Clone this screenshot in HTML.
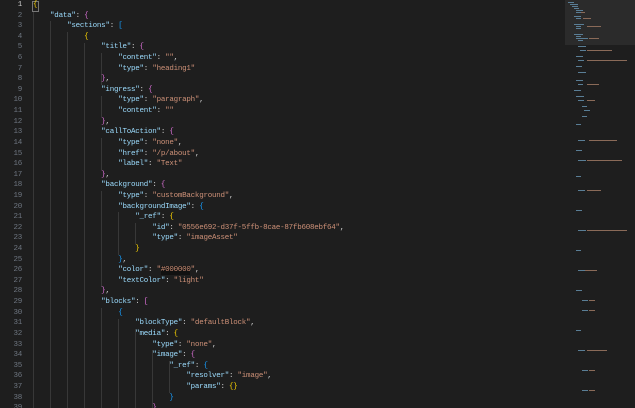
<!DOCTYPE html>
<html><head><meta charset="utf-8"><style>
html,body{margin:0;padding:0;background:#1e1e1e;width:635px;height:408px;overflow:hidden}
body{position:relative;font-family:"Liberation Mono",monospace;font-size:7.5px;letter-spacing:-0.24px;color:#d4d4d4}
.l{position:absolute;left:0;height:10.61px;line-height:10.61px;white-space:pre;width:560px}
.n{position:absolute;left:0;width:22px;text-align:right;color:#6e7681}
.c{position:absolute;left:33px}
.k{color:#9cdcfe}.s{color:#ce9178}.g{color:#ffd700}.m{color:#da70d6}.b{color:#179fff}
.guide{position:absolute;width:1px;background:#383838}
</style></head><body>
<div style="position:absolute;left:565px;top:0;width:70px;height:45px;background:#2b2b2b"></div>
<div class="guide" style="left:33px;top:11px;height:397px"></div>
<div class="guide" style="left:50px;top:21px;height:387px"></div>
<div class="guide" style="left:67px;top:32px;height:376px"></div>
<div class="guide" style="left:84px;top:43px;height:365px"></div>
<div class="guide" style="left:101px;top:53px;height:32px"></div>
<div class="guide" style="left:101px;top:96px;height:21px"></div>
<div class="guide" style="left:101px;top:138px;height:32px"></div>
<div class="guide" style="left:101px;top:191px;height:96px"></div>
<div class="guide" style="left:101px;top:308px;height:100px"></div>
<div class="guide" style="left:118px;top:212px;height:43px"></div>
<div class="guide" style="left:118px;top:319px;height:89px"></div>
<div class="guide" style="left:135px;top:223px;height:21px"></div>
<div class="guide" style="left:135px;top:329px;height:79px"></div>
<div class="guide" style="left:152px;top:350px;height:58px"></div>
<div class="guide" style="left:169px;top:361px;height:32px"></div>
<div style="position:absolute;left:32px;top:1px;width:5px;height:9px;border:1px solid #777"></div>
<div style="position:absolute;left:161px;top:266px;width:29px;height:9px;background:#111"></div>
<div class="l" style="top:0px"><span class="n" style="color:#ccc">1</span><span class="c"><span class="g">{</span></span></div>
<div class="l" style="top:10.61px"><span class="n">2</span><span class="c">    <span class="k">"data"</span>: <span class="m">{</span></span></div>
<div class="l" style="top:21.22px"><span class="n">3</span><span class="c">        <span class="k">"sections"</span>: <span class="b">[</span></span></div>
<div class="l" style="top:31.83px"><span class="n">4</span><span class="c">            <span class="g">{</span></span></div>
<div class="l" style="top:42.44px"><span class="n">5</span><span class="c">                <span class="k">"title"</span>: <span class="m">{</span></span></div>
<div class="l" style="top:53.05px"><span class="n">6</span><span class="c">                    <span class="k">"content"</span>: <span class="s">""</span>,</span></div>
<div class="l" style="top:63.66px"><span class="n">7</span><span class="c">                    <span class="k">"type"</span>: <span class="s">"heading1"</span></span></div>
<div class="l" style="top:74.27px"><span class="n">8</span><span class="c">                <span class="m">}</span>,</span></div>
<div class="l" style="top:84.88px"><span class="n">9</span><span class="c">                <span class="k">"ingress"</span>: <span class="m">{</span></span></div>
<div class="l" style="top:95.49px"><span class="n">10</span><span class="c">                    <span class="k">"type"</span>: <span class="s">"paragraph"</span>,</span></div>
<div class="l" style="top:106.1px"><span class="n">11</span><span class="c">                    <span class="k">"content"</span>: <span class="s">""</span></span></div>
<div class="l" style="top:116.71px"><span class="n">12</span><span class="c">                <span class="m">}</span>,</span></div>
<div class="l" style="top:127.32px"><span class="n">13</span><span class="c">                <span class="k">"callToAction"</span>: <span class="m">{</span></span></div>
<div class="l" style="top:137.93px"><span class="n">14</span><span class="c">                    <span class="k">"type"</span>: <span class="s">"none"</span>,</span></div>
<div class="l" style="top:148.54px"><span class="n">15</span><span class="c">                    <span class="k">"href"</span>: <span class="s">"/p/about"</span>,</span></div>
<div class="l" style="top:159.15px"><span class="n">16</span><span class="c">                    <span class="k">"label"</span>: <span class="s">"Text"</span></span></div>
<div class="l" style="top:169.76px"><span class="n">17</span><span class="c">                <span class="m">}</span>,</span></div>
<div class="l" style="top:180.37px"><span class="n">18</span><span class="c">                <span class="k">"background"</span>: <span class="m">{</span></span></div>
<div class="l" style="top:190.98px"><span class="n">19</span><span class="c">                    <span class="k">"type"</span>: <span class="s">"customBackground"</span>,</span></div>
<div class="l" style="top:201.59px"><span class="n">20</span><span class="c">                    <span class="k">"backgroundImage"</span>: <span class="b">{</span></span></div>
<div class="l" style="top:212.2px"><span class="n">21</span><span class="c">                        <span class="k">"_ref"</span>: <span class="g">{</span></span></div>
<div class="l" style="top:222.81px"><span class="n">22</span><span class="c">                            <span class="k">"id"</span>: <span class="s">"0556e692-d37f-5ffb-8cae-87fb608ebf64"</span>,</span></div>
<div class="l" style="top:233.42px"><span class="n">23</span><span class="c">                            <span class="k">"type"</span>: <span class="s">"imageAsset"</span></span></div>
<div class="l" style="top:244.03px"><span class="n">24</span><span class="c">                        <span class="g">}</span></span></div>
<div class="l" style="top:254.64px"><span class="n">25</span><span class="c">                    <span class="b">}</span>,</span></div>
<div class="l" style="top:265.25px"><span class="n">26</span><span class="c">                    <span class="k">"color"</span>: <span class="s">"#000000"</span>,</span></div>
<div class="l" style="top:275.86px"><span class="n">27</span><span class="c">                    <span class="k">"textColor"</span>: <span class="s">"light"</span></span></div>
<div class="l" style="top:286.47px"><span class="n">28</span><span class="c">                <span class="m">}</span>,</span></div>
<div class="l" style="top:297.08px"><span class="n">29</span><span class="c">                <span class="k">"blocks"</span>: <span class="m">[</span></span></div>
<div class="l" style="top:307.69px"><span class="n">30</span><span class="c">                    <span class="b">{</span></span></div>
<div class="l" style="top:318.3px"><span class="n">31</span><span class="c">                        <span class="k">"blockType"</span>: <span class="s">"defaultBlock"</span>,</span></div>
<div class="l" style="top:328.91px"><span class="n">32</span><span class="c">                        <span class="k">"media"</span>: <span class="g">{</span></span></div>
<div class="l" style="top:339.52px"><span class="n">33</span><span class="c">                            <span class="k">"type"</span>: <span class="s">"none"</span>,</span></div>
<div class="l" style="top:350.13px"><span class="n">34</span><span class="c">                            <span class="k">"image"</span>: <span class="m">{</span></span></div>
<div class="l" style="top:360.74px"><span class="n">35</span><span class="c">                                <span class="k">"_ref"</span>: <span class="b">{</span></span></div>
<div class="l" style="top:371.35px"><span class="n">36</span><span class="c">                                    <span class="k">"resolver"</span>: <span class="s">"image"</span>,</span></div>
<div class="l" style="top:381.96px"><span class="n">37</span><span class="c">                                    <span class="k">"params"</span>: <span class="g">{}</span></span></div>
<div class="l" style="top:392.57px"><span class="n">38</span><span class="c">                                <span class="b">}</span></span></div>
<div class="l" style="top:403.18px"><span class="n">39</span><span class="c">                            <span class="m">}</span>,</span></div>
<svg style="position:absolute;left:565px;top:0" width="70" height="408">
<g fill="#5a7e96">
<rect x="3" y="2" width="6" height="1"/><rect x="5" y="4" width="8" height="1"/><rect x="7" y="6" width="6" height="1"/><rect x="9" y="8" width="5" height="1"/><rect x="11" y="10" width="7" height="1"/><rect x="11" y="12" width="5" height="1"/><rect x="9" y="16" width="7" height="1"/><rect x="11" y="18" width="5" height="1"/><rect x="9" y="24" width="10" height="1"/><rect x="11" y="26" width="5" height="1"/><rect x="11" y="28" width="5" height="1"/><rect x="9" y="34" width="9" height="1"/><rect x="11" y="36" width="5" height="1"/><rect x="11" y="38" width="12" height="1"/><rect x="13" y="40" width="5" height="1"/>
<rect x="13" y="46" width="8" height="1"/><rect x="15" y="50" width="6" height="1"/><rect x="11" y="56" width="7" height="1"/><rect x="13" y="60" width="6" height="1"/><rect x="11" y="66" width="6" height="1"/><rect x="13" y="72" width="8" height="1"/><rect x="11" y="80" width="7" height="1"/><rect x="13" y="84" width="5" height="1"/><rect x="9" y="90" width="7" height="1"/><rect x="11" y="96" width="8" height="1"/><rect x="13" y="100" width="6" height="1"/><rect x="17" y="106" width="5" height="1"/><rect x="19" y="110" width="6" height="1"/><rect x="17" y="116" width="5" height="1"/>
<rect x="11" y="124" width="5" height="1"/><rect x="13" y="140" width="7" height="1"/><rect x="11" y="150" width="6" height="1"/><rect x="13" y="160" width="8" height="1"/><rect x="11" y="176" width="5" height="1"/><rect x="13" y="190" width="7" height="1"/><rect x="11" y="210" width="6" height="1"/><rect x="13" y="230" width="8" height="1"/><rect x="11" y="250" width="5" height="1"/><rect x="13" y="270" width="7" height="1"/><rect x="11" y="290" width="6" height="1"/><rect x="17" y="300" width="6" height="1"/><rect x="17" y="310" width="6" height="1"/><rect x="11" y="330" width="5" height="1"/><rect x="13" y="350" width="7" height="1"/><rect x="17" y="370" width="6" height="1"/><rect x="17" y="390" width="6" height="1"/>
</g>
<g fill="#8a6a58">
<rect x="16" y="12" width="4" height="1"/><rect x="18" y="18" width="8" height="1"/><rect x="22" y="26" width="14" height="1"/><rect x="24" y="38" width="10" height="1"/><rect x="22" y="50" width="25" height="1"/><rect x="22" y="60" width="40" height="1"/><rect x="22" y="84" width="12" height="1"/><rect x="22" y="100" width="8" height="1"/><rect x="24" y="140" width="28" height="1"/><rect x="22" y="160" width="35" height="1"/><rect x="22" y="190" width="14" height="1"/><rect x="22" y="230" width="40" height="1"/><rect x="20" y="270" width="12" height="1"/><rect x="24" y="300" width="6" height="1"/><rect x="24" y="310" width="6" height="1"/><rect x="22" y="350" width="20" height="1"/><rect x="24" y="370" width="6" height="1"/><rect x="24" y="390" width="6" height="1"/>
</g>
</svg>
</body></html>
